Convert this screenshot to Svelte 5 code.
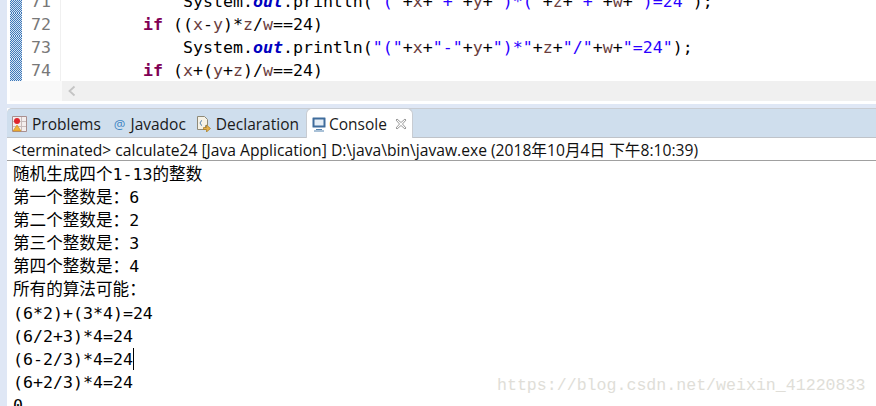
<script>
  // token kinds: k keyword, f static field, s string, v variable, plain otherwise
  const S = (t) => ({ t, c: 's' });
  const V = (t) => ({ t, c: 'v' });
  const P = (t) => ({ t, c: '' });

  const sysout = [P('System.'), { t: 'out', c: 'f' }, P('.println(')];

  const codeLines = [
    {
      no: 71,
      indent: 4,
      parts: [...sysout, S('"("'), P('+'), V('x'), P('+'), S('"+"'), P('+'), V('y'), P('+'), S('")*("'), P('+'), V('z'), P('+'), S('"+"'), P('+'), V('w'), P('+'), S('")=24"'), P(');')]
    },
    {
      no: 72,
      indent: 0,
      parts: [{ t: 'if', c: 'k' }, P(' (('), V('x'), P('-'), V('y'), P(')*'), V('z'), P('/'), V('w'), P('==24)')]
    },
    {
      no: 73,
      indent: 4,
      parts: [...sysout, S('"("'), P('+'), V('x'), P('+'), S('"-"'), P('+'), V('y'), P('+'), S('")*"'), P('+'), V('z'), P('+'), S('"/"'), P('+'), V('w'), P('+'), S('"=24"'), P(');')]
    },
    {
      no: 74,
      indent: 0,
      parts: [{ t: 'if', c: 'k' }, P(' ('), V('x'), P('+('), V('y'), P('+'), V('z'), P(')/'), V('w'), P('==24)')]
    }
  ];

  const output = [
    '随机生成四个1-13的整数',
    '第一个整数是：6',
    '第二个整数是：2',
    '第三个整数是：3',
    '第四个整数是：4',
    '所有的算法可能：',
    '(6*2)+(3*4)=24',
    '(6/2+3)*4=24',
    '(6-2/3)*4=24',
    '(6+2/3)*4=24',
    '0'
  ];
</script>

<div class="page">
  <div class="editor">
    <div class="code">
      {#each codeLines as line}
        <div class="row">
          <div class="mark"></div>
          <div class="no">{line.no}</div>
          <pre class="src" class:deep={line.indent > 0}>{#each line.parts as p}<span class={p.c}>{p.t}</span>{/each}</pre>
        </div>
      {/each}
    </div>
    <div class="hscroll">
      <div class="corner"></div>
      <div class="track">
        <svg width="10" height="12" viewBox="0 0 10 12"><path d="M7.500 1.500 2.500 6l5 4.500" fill="none" stroke="#c4c4c4" stroke-width="1.800" /></svg>
      </div>
    </div>
  </div>

  <div class="views">
    <div class="tabs">
      <div class="tab">
        <svg width="15" height="16" viewBox="0 0 15 16">
          <path d="M.5.500h14v15H.5z" fill="#f4eeee" stroke="#a98f8f" />
          <path d="M9.500 1v14M1 5.500h13M1 10.500h13" stroke="#c9bcbc" />
          <circle cx="5" cy="5" r="3" fill="#e0262c" />
          <path d="M5 9 9 15H1z" fill="#f2b33a" stroke="#c98a1c" stroke-width=".6" />
        </svg>
        Problems
      </div>
      <div class="tab">
        <span class="at">@</span>
        Javadoc
      </div>
      <div class="tab">
        <svg width="15" height="16" viewBox="0 0 15 16">
          <path d="M1.500.500h7l3 3v6h-2v4h-8z" fill="#f6f2e6" stroke="#8f8a78" />
          <path d="M6 4.500C4.500 4.500 5 7 3.800 7 5 7 4.500 9.500 6 9.500" fill="none" stroke="#4f7fae" />
          <path d="M7.500 11.500h3v-2.500l4 3.500-4 3.500v-2.500h-3z" fill="#e5b04a" stroke="#a67a1f" stroke-width=".7" />
        </svg>
        Declaration
      </div>
      <div class="tab active">
        <svg class="monitor" width="14" height="15" viewBox="0 0 14 15">
          <path d="M1 .500h12a.5.500 0 0 1 .5.500v9a.5.500 0 0 1-.5.500H1a.5.500 0 0 1-.5-.500V1A.5.500 0 0 1 1 .500z" fill="#3f6c9c" />
          <path d="M2.500 2.500h9v6h-9z" fill="#e6eef6" />
          <path d="M4 12h6v1H4zM2 13.500h10v1H2z" fill="#5583b0" />
        </svg>
        Console
        <svg class="close" width="12" height="12" viewBox="0 0 12 12">
          <path d="M1 2 2 1l4 3.500L10 1l1 1-3.500 4L11 10l-1 1-4-3.500L2 11l-1-1 3.500-4z" fill="#fff" stroke="#9b9b9b" />
        </svg>
      </div>
    </div>
    <div class="status">&lt;terminated&gt; calculate24 [Java Application] D:\java\bin\javaw.exe (2018年10月4日 下午8:10:39)</div>
    <div class="console">
      {#each output as text, i}
        <div class="out">{text}{#if i === 8}<span class="caret"></span>{/if}</div>
      {/each}
    </div>
    <div class="watermark">https://blog.csdn.net/weixin_41220833</div>
  </div>
</div>

<style>
  :global(body) {
    margin: 0;
    background: #fff;
  }

  .page {
    position: relative;
    width: 876px;
    height: 406px;
    overflow: hidden;
    background: #dfe7f5;
    padding-left: 7px;
    box-sizing: border-box;
  }

  .editor {
    height: 104px;
    background: #fff;
    padding-left: 3px;
    overflow: hidden;
  }

  .code {
    height: 81px;
    overflow: hidden;
  }

  .row {
    display: flex;
    height: 23px;
  }

  .row:first-child {
    margin-top: -10px;
  }

  .mark {
    width: 12px;
    background-color: #7f9fd0;
    background-image: repeating-conic-gradient(#3f78b8 0% 25%, #d8e6f4 0% 50%);
    background-size: 2px 2px;
  }

  .no {
    width: 29px;
    padding-right: 9px;
    margin-right: 82px;
    text-align: right;
    font: 16.600px/23px "DejaVu Sans Mono", monospace;
    color: #787878;
    border-right: 1px solid #f0f0f0;
  }

  .src {
    margin: 0;
    font: 16.600px/23px "DejaVu Sans Mono", monospace;
    color: #000;
    white-space: pre;
  }

  .src.deep {
    padding-left: 40px;
  }

  .k {
    color: #7f0055;
    font-weight: bold;
  }

  .f {
    color: #0000c0;
    font-weight: bold;
    font-style: italic;
  }

  .s {
    color: #2a00ff;
  }

  .v {
    color: #6a3e3e;
  }

  .hscroll {
    display: flex;
    height: 20px;
  }

  .corner {
    width: 52px;
    background: #f9f9f9;
  }

  .track {
    flex: 1;
    background: #f0f0f0;
    display: flex;
    align-items: center;
    padding-left: 5px;
  }

  .views {
    margin-top: 4px;
    background: #fff;
    height: 298px;
  }

  .tabs {
    display: flex;
    height: 27px;
    padding-top: 1px;
    background: #cfdeed;
    border-top: 1px solid #c8ccd2;
    border-bottom: 1px solid #bfc3c9;
    border-top-left-radius: 5px;
  }

  .tab {
    display: flex;
    align-items: center;
    gap: 5px;
    padding: 0 5px;
    font: 15.500px "Open Sans", "Noto Sans", sans-serif;
    color: #1a1a1a;
    white-space: nowrap;
  }

  .tab.active {
    margin: -2px 0 -1px 2px;
    padding-top: 1px;
    background: #fff;
    border: 1px solid #c8ccd2;
    border-bottom: none;
    border-radius: 6px 6px 0 0;
  }

  .monitor {
    flex: none;
    margin-right: -2px;
  }

  .close {
    margin-left: 3px;
  }

  .at {
    margin-left: 3px;
    font: 13px "Open Sans", sans-serif;
    color: #3f86c4;
  }

  .status {
    height: 21px;
    padding: 1px 0 0 5px;
    font: 15.650px/22px "Open Sans", "Noto Sans CJK SC", sans-serif;
    color: #111;
    border-bottom: 1px solid #a0a0a0;
    white-space: nowrap;
  }

  .console {
    padding: 2px 0 0 6px;
    font: 16.600px/23.100px "DejaVu Sans Mono", "Noto Sans CJK SC", monospace;
    color: #000;
    white-space: nowrap;
  }

  .out {
    height: 23.100px;
  }

  .caret {
    display: inline-block;
    width: 1px;
    height: 22px;
    background: #000;
    vertical-align: top;
  }

  .watermark {
    position: absolute;
    left: 497px;
    top: 376px;
    font: 16.600px/20px "Liberation Mono", monospace;
    color: #e0ded8;
  }
</style>
